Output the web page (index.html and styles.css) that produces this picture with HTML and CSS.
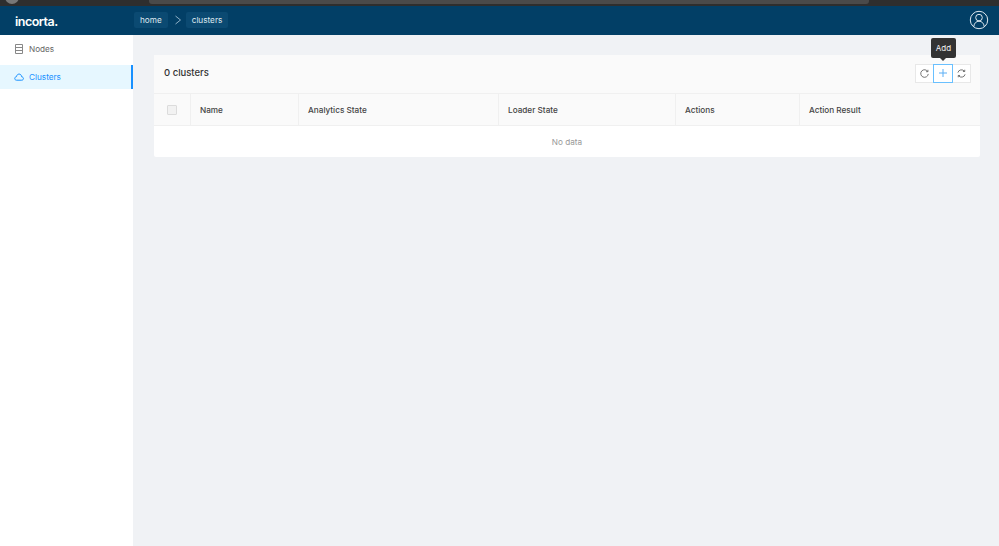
FILE: index.html
```html
<!DOCTYPE HTML>
<html>
<head>
<title>Clusters</title>
<link rel="stylesheet" href="styles.css">
</head>
<body>
<div class="browser-strip">
  <div class="browser-dot"></div>
  <div class="browser-url"></div>
</div>
<div class="header">
  <div class="logo">incorta.</div>
  <div class="crumbs">
    <span class="crumb">home</span>
    <svg class="crumb-arrow" width="8" height="10" viewBox="0 0 8 10"><path d="M1.500 1l5 4-5 4" fill="none" stroke="#8fb0c6" stroke-width="1"/></svg>
    <span class="crumb">clusters</span>
  </div>
  <svg class="avatar" width="20" height="20" viewBox="0 0 20 20" fill="none" stroke="#dfe9f0" stroke-width="1">
    <circle cx="10" cy="10" r="8.700"/>
    <circle cx="10" cy="7.600" r="3.300"/>
    <path d="M4.800 16.400c.4-3.200 2.400-5.200 5.200-5.200s4.800 2 5.200 5.200"/>
  </svg>
</div>
<div class="main">
  <div class="sidebar">
    <div class="side-item">
      <svg width="10" height="10" viewBox="0 0 10 10" fill="none" stroke="#888" stroke-width="1"><path d="M1.500 .5h7v9h-7zM1.500 3.500h7M1.500 6.500h7"/></svg>
      Nodes
    </div>
    <div class="side-item active">
      <svg width="10" height="8" viewBox="0 0 10 8" fill="none" stroke="#1890ff" stroke-width="1"><path d="M2.500 7.200h5.200c2.300 0 2.300-3.200 0-3.400C7.300 .2 3 .2 2.500 3.600c-2.300.3-2.300 3.600 0 3.600z"/></svg>
      Clusters
    </div>
  </div>
  <div class="content">
    <div class="card">
      <div class="card-title">
        <span>0 clusters</span>
        <div class="tools">
          <div class="tool">
            <svg width="9" height="9" viewBox="0 0 10 10" fill="none" stroke="#666" stroke-width="1"><path d="M8.700 3A4.200 4.200 0 1 0 9.200 5.500M8.800 .9V3H6.700"/></svg>
          </div>
          <div class="tool tool-on">
            <svg width="8" height="8" viewBox="0 0 8 8" fill="none" stroke="#5aaef5" stroke-width="1"><path d="M4 0v8M0 4h8"/></svg>
            <div class="tip">Add</div>
          </div>
          <div class="tool">
            <svg width="9" height="9" viewBox="0 0 10 10" fill="none" stroke="#666" stroke-width="1"><path d="M1 4A4.100 4.100 0 0 1 8.300 2.600M9 5.900A4.100 4.100 0 0 1 1.700 7.400M8.600 .8v2H6.600M1.400 9.200v-2h2"/></svg>
          </div>
        </div>
      </div>
      <div class="row head">
        <div class="cell c-check"><span class="check"></span></div>
        <div class="cell c-name">Name</div>
        <div class="cell c-analytics">Analytics State</div>
        <div class="cell c-loader">Loader State</div>
        <div class="cell c-actions">Actions</div>
        <div class="cell c-result">Action Result</div>
      </div>
      <div class="empty">No data</div>
    </div>
  </div>
</div>
</body>
</html>
```
FILE: styles.css
```css
* {
  box-sizing: border-box;
}
html, body {
  height: 100%;
}
body {
  margin: 0;
  display: flex;
  flex-direction: column;
  overflow: hidden;
  background: #f0f2f5;
  font-family: Inter, "Liberation Sans", sans-serif;
  font-size: 8.200px;
  color: #333;
}
.browser-strip {
  height: 6px;
  flex: none;
  display: flex;
  overflow: hidden;
  background: #2e2e2e;
}
.browser-dot {
  width: 14px;
  height: 14px;
  margin: -10px 0 0 5px;
  border-radius: 50%;
  background: #777;
}
.browser-url {
  width: 720px;
  height: 10px;
  margin: -6px 0 0 130px;
  border-radius: 3px;
  background: #4a4a4a;
}
.header {
  height: 29px;
  flex: none;
  display: flex;
  align-items: center;
  padding: 0 10px 0 15px;
  background: #023f66;
}
.logo {
  width: 119px;
  margin-top: 2px;
  font-size: 12.500px;
  font-weight: 600;
  color: #fff;
  letter-spacing: -.5px;
}
.crumbs {
  display: flex;
  align-items: center;
  margin-top: -1px;
}
.crumb {
  padding: 3px 6px;
  border-radius: 2px;
  background: #0b4a72;
  color: #dfe9f0;
  line-height: 10px;
}
.crumb-arrow {
  margin: 0 4px 0 6px;
}
.avatar {
  margin-left: auto;
  margin-top: -1px;
}
.main {
  flex: 1;
  display: flex;
}
.sidebar {
  width: 133px;
  flex: none;
  padding-top: 2px;
  background: #fff;
}
.side-item {
  height: 24px;
  margin-bottom: 4px;
  display: flex;
  align-items: center;
  gap: 5px;
  padding-left: 14px;
  color: #666;
}
.side-item.active {
  background: #e6f7ff;
  border-right: 2px solid #1890ff;
  color: #1890ff;
}
.content {
  flex: 1;
  padding: 20px 19px 0 21px;
}
.card {
  background: #fff;
  border-radius: 2px;
}
.card-title {
  height: 39px;
  display: flex;
  align-items: center;
  justify-content: space-between;
  padding: 0 9px 4px 10px;
  background: #fafafa;
  border-bottom: 1px solid #f0f0f0;
  font-size: 9.500px;
  font-weight: 500;
  color: #333;
}
.tools {
  display: flex;
  margin-top: 2px;
}
.tool {
  position: relative;
  width: 19px;
  height: 19px;
  display: flex;
  align-items: center;
  justify-content: center;
  margin-left: -1px;
  background: #fff;
  border: 1px solid #e8e8e8;
}
.tool-on {
  z-index: 1;
  width: 20px;
  border-color: #69c0ff;
}
.tip {
  position: absolute;
  left: -3px;
  top: -27px;
  width: 25px;
  height: 20px;
  border-radius: 2px;
  background: #333;
  color: #f2f2f2;
  font-size: 8px;
  font-weight: 400;
  line-height: 20px;
  text-align: center;
}
.tip::after {
  content: "";
  position: absolute;
  left: 9px;
  bottom: -3px;
  border-left: 3px solid transparent;
  border-right: 3px solid transparent;
  border-top: 3px solid #333;
}
.row {
  display: flex;
}
.head {
  height: 32px;
  background: #fafafa;
  border-bottom: 1px solid #f0f0f0;
  font-weight: 500;
  color: #444;
}
.cell {
  display: flex;
  align-items: center;
  padding-left: 9px;
  border-right: 1px solid #f0f0f0;
}
.cell:last-child {
  border-right: none;
}
.c-check {
  width: 37px;
  padding-left: 13px;
}
.c-name {
  width: 108px;
}
.c-analytics {
  width: 200px;
}
.c-loader {
  width: 177px;
}
.c-actions {
  width: 124px;
}
.c-result {
  flex: 1;
}
.check {
  width: 10px;
  height: 10px;
  border: 1px solid #dcdcdc;
  border-radius: 1px;
  background: #f2f2f2;
}
.empty {
  height: 31px;
  padding-top: 1px;
  line-height: 31px;
  text-align: center;
  color: #999;
}
```
